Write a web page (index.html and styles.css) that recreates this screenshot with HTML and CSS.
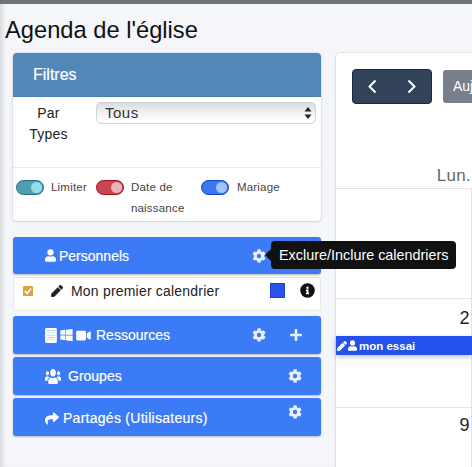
FILE: index.html
```html
<!DOCTYPE html>
<html lang="fr">
<head>
<meta charset="utf-8">
<title>Agenda de l'église</title>
<link rel="stylesheet" href="styles.css">
</head>
<body>
<svg class="defs" width="0" height="0">
  <symbol id="cog" viewBox="0 0 512 512"><path d="M487 315l-42-25a190 190 0 0 0 0-68l42-25c5-3 7-8 5-14-11-35-30-67-54-93-4-4-10-5-15-2l-42 25a187 187 0 0 0-59-34V30c0-6-4-10-9-11-36-8-73-8-107 0-5 1-9 5-9 11v49a192 192 0 0 0-59 34L96 89c-5-3-11-2-15 2-24 26-43 58-54 93-2 6 0 11 5 14l42 25a190 190 0 0 0 0 68l-42 25c-5 3-7 8-5 14 11 35 30 67 54 93 4 4 10 5 15 2l42-25a187 187 0 0 0 59 34v49c0 6 4 10 9 11 36 8 73 8 107 0 5-1 9-5 9-11v-49a192 192 0 0 0 59-34l42 25c5 3 11 2 15-2 24-26 43-58 54-93 2-6 0-11-5-14zM256 336a80 80 0 1 1 0-160 80 80 0 0 1 0 160z"/></symbol>
  <symbol id="user" viewBox="0 0 448 512"><path d="M224 256a128 128 0 1 0 0-256 128 128 0 0 0 0 256zm90 32h-17a174 174 0 0 1-146 0h-17C60 288 0 348 0 422v42c0 26 22 48 48 48h352c26 0 48-22 48-48v-42c0-74-60-134-134-134z"/></symbol>
  <symbol id="pencil" viewBox="0 0 512 512"><path d="M497 75L437 15c-20-20-52-20-72 0l-56 56 132 132 56-56c20-20 20-52 0-72zM286 94L12 368 0 488c-2 14 10 26 24 24l120-12 274-274z"/></symbol>
  <symbol id="tablet" viewBox="0 0 400 512"><path d="M352 0H48C22 0 0 22 0 48v416c0 26 22 48 48 48h304c26 0 48-22 48-48V48c0-26-22-48-48-48z"/><path class="tablet-lines" d="M50 70h300v22H50zm0 80h300v22H50zm0 80h300v22H50zm0 80h300v22H50zm0 80h300v22H50z"/></symbol>
  <symbol id="windows" viewBox="0 0 448 512"><path d="M0 93l184-25v178H0zm0 326l184 25V270H0zm204 28l244 33V270H204zm0-382v181h244V32z"/></symbol>
  <symbol id="video" viewBox="0 0 576 512"><path d="M336 64H48C22 64 0 86 0 112v288c0 26 22 48 48 48h288c26 0 48-22 48-48V112c0-26-22-48-48-48zm190 38L416 177v158l110 75c21 14 50 0 50-25V127c0-25-29-39-50-25z"/></symbol>
  <symbol id="users" viewBox="0 30 640 450" preserveAspectRatio="none"><path d="M96 224a64 64 0 1 0 0-128 64 64 0 0 0 0 128zm448 0a64 64 0 1 0 0-128 64 64 0 0 0 0 128zm32 32h-64c-18 0-34 7-45 19 40 22 69 62 75 109h66c18 0 32-14 32-32v-32c0-35-29-64-64-64zm-256 0a112 112 0 1 0 0-224 112 112 0 0 0 0 224zm77 32h-8a157 157 0 0 1-138 0h-8c-64 0-115 52-115 115v29c0 26 21 48 48 48h288c27 0 48-22 48-48v-29c0-63-51-115-115-115zm-224-13c-11-12-27-19-45-19H64c-35 0-64 29-64 64v32c0 18 14 32 32 32h66c6-47 35-87 75-109z"/></symbol>
  <symbol id="share" viewBox="0 20 512 460"><path d="M504 184L328 32c-15-13-40-3-40 18v80C128 132 0 164 0 316c0 61 39 122 83 154 13 10 32-2 27-18-45-144 21-182 178-184v88c0 21 25 31 40 18l176-152c11-10 11-28 0-38z"/></symbol>
  <symbol id="plus" viewBox="0 0 448 512"><path d="M416 208H272V64c0-18-14-32-32-32h-32c-18 0-32 14-32 32v144H32c-18 0-32 14-32 32v32c0 18 14 32 32 32h144v144c0 18 14 32 32 32h32c18 0 32-14 32-32V304h144c18 0 32-14 32-32v-32c0-18-14-32-32-32z"/></symbol>
  <symbol id="info" viewBox="0 0 512 512"><path d="M256 8a248 248 0 1 0 0 496 248 248 0 0 0 0-496zm0 110a42 42 0 1 1 0 84 42 42 0 0 1 0-84zm56 254c0 7-5 12-12 12h-88c-7 0-12-5-12-12v-24c0-7 5-12 12-12h12v-64h-12c-7 0-12-5-12-12v-24c0-7 5-12 12-12h64c7 0 12 5 12 12v100h12c7 0 12 5 12 12z"/></symbol>
  <symbol id="left" viewBox="0 0 14 20"><path d="M11 2L3 10l8 8" fill="none" stroke="currentColor" stroke-width="2.600"/></symbol>
  <symbol id="right" viewBox="0 0 14 20"><path d="M3 2l8 8-8 8" fill="none" stroke="currentColor" stroke-width="2.600"/></symbol>
</svg>

<div class="topbar"></div>
<h1 class="title">Agenda de l'église</h1>

<div class="layout">
  <aside class="sidebar">
    <section class="card filters">
      <header class="filters-head">Filtres</header>
      <div class="filters-body">
        <label class="type-label" for="types">Par Types</label>
        <div class="select-wrap">
          <select id="types" class="select"><option>Tous</option></select>
          <svg class="select-arrows" viewBox="0 0 8 12" width="8" height="12"><path d="M4 0l3.500 4.500H.5zM4 12L.5 7.500h7z"/></svg>
        </div>
      </div>
      <div class="filters-foot">
        <div class="toggle-item item-limit"><span class="toggle teal"></span><span class="toggle-text">Limiter</span></div>
        <div class="toggle-item item-birth"><span class="toggle red"></span><span class="toggle-text">Date de naissance</span></div>
        <div class="toggle-item"><span class="toggle blue"></span><span class="toggle-text">Mariage</span></div>
      </div>
    </section>

    <div class="calendars">
      <div class="panel panel-personal">
        <span class="panel-title"><svg class="ico i-user"><use href="#user"/></svg>Personnels</span>
        <svg class="ico i-cog cog-mid"><use href="#cog"/></svg>
        <div class="tooltip">Exclure/Inclure calendriers</div>
      </div>
      <div class="cal-row">
        <span class="check"><svg viewBox="0 0 10 10" width="10" height="10"><path d="M2 5l2.200 2.500L8 2.500" fill="none" stroke="#fff" stroke-width="1.500"/></svg></span>
        <svg class="ico i-pencil"><use href="#pencil"/></svg>
        <span class="cal-name">Mon premier calendrier</span>
        <span class="swatch"></span>
        <svg class="ico i-info"><use href="#info"/></svg>
      </div>
      <div class="panel panel-res">
        <span class="panel-title"><svg class="ico i-tablet"><use href="#tablet"/></svg><svg class="ico i-win"><use href="#windows"/></svg><svg class="ico i-video"><use href="#video"/></svg>Ressources</span>
        <svg class="ico i-cog cog-mid"><use href="#cog"/></svg>
        <svg class="ico i-plus"><use href="#plus"/></svg>
      </div>
      <div class="panel panel-group">
        <span class="panel-title"><svg class="ico i-users"><use href="#users"/></svg>Groupes</span>
        <svg class="ico i-cog"><use href="#cog"/></svg>
      </div>
      <div class="panel panel-share">
        <span class="panel-title"><svg class="ico i-share"><use href="#share"/></svg>Partagés (Utilisateurs)</span>
        <svg class="ico i-cog"><use href="#cog"/></svg>
      </div>
    </div>
  </aside>

  <main class="card calendar">
    <div class="toolbar">
      <div class="nav-btns">
        <svg class="chev"><use href="#left"/></svg>
        <svg class="chev"><use href="#right"/></svg>
      </div>
      <button class="today" type="button">Aujourd'hui</button>
    </div>
    <div class="day-head">Lun.</div>
    <div class="week week-1"></div>
    <div class="week week-2">
      <div class="day-num">2</div>
      <div class="event"><svg class="ico e-pencil"><use href="#pencil"/></svg><svg class="ico e-user"><use href="#user"/></svg>mon essai</div>
    </div>
    <div class="week week-3"><div class="day-num day-num-last">9</div></div>
  </main>
</div>
</body>
</html>
```
FILE: styles.css
```css
* { box-sizing: border-box; }
html, body { height: 100%; }
body {
  margin: 0;
  overflow: hidden;
  background: #f4f6f9;
  box-shadow: inset 5px 0 5px -3px rgba(0, 0, 0, .14);
  color: #1f2d3d;
  font-family: "Liberation Sans", Arial, sans-serif;
}
.defs { position: absolute; }
.topbar { height: 4px; background: #6d747c; }
.title {
  margin: 13px 0 0 5px;
  height: 36px;
  font-size: 23.700px;
  line-height: 27px;
  font-weight: 400;
  color: #111;
}
.layout { display: flex; gap: 15px; padding-left: 13px; width: 800px; align-items: flex-start; }
.sidebar { width: 308px; flex: none; }
.card { background: #fff; border-radius: 4px; box-shadow: 0 0 2px rgba(0, 0, 0, .2), 0 1px 3px rgba(0, 0, 0, .1); }
.ico { fill: currentColor; display: block; flex: none; }

.filters { height: 168px; overflow: hidden; }
.filters-head {
  height: 44px;
  padding: 13px 0 0 20px;
  background: #5288b8;
  color: #fff;
  font-size: 16px;
  line-height: 18px;
  -webkit-text-stroke: .2px #fff;
  border-bottom: 1px solid #4a7eab;
}
.filters-body { display: flex; height: 71px; border-bottom: 1px solid #e9ecef; }
.type-label {
  width: 83px;
  padding: 6px 19px 0 7px;
  text-align: center;
  font-size: 14px;
  line-height: 21px;
  letter-spacing: .2px;
  color: #222;
}
.select-wrap { position: relative; width: 220px; height: 22px; margin-top: 5px; }
.select {
  appearance: none;
  display: block;
  width: 100%;
  height: 100%;
  padding: 0 0 0 8px;
  border: 1px solid #ced4da;
  border-radius: 5px;
  background: linear-gradient(#dcdcdc, #f6f6f6 60%, #fff);
  font: 15px/20px "Liberation Sans", Arial, sans-serif;
  letter-spacing: .5px;
  color: #333;
}
.select-arrows { position: absolute; right: 4px; top: 5px; fill: #222; }

.filters-foot { display: flex; padding: 12px 0 0 3px; font-size: 11.500px; color: #444; }
.toggle-item { display: flex; align-items: flex-start; }
.item-limit { margin-right: 9px; }
.item-birth { width: 97px; margin-right: 8px; }
.toggle { position: relative; flex: none; width: 28px; height: 15px; border-radius: 8px; border: 1px solid; margin-right: 7px; }
.toggle::after { content: ""; position: absolute; right: 1px; top: 1px; width: 11px; height: 11px; border-radius: 50%; }
.teal { background: #4e9db3; border-color: #1d6f85; }
.teal::after { background: #94dfee; }
.red { background: #c9454f; border-color: #a3131f; }
.red::after { background: #eab4ba; }
.blue { background: #3a78f2; border-color: #0d47bd; margin-right: 8px; }
.blue::after { background: #a5c3fa; }
.toggle-text { line-height: 21px; margin-top: -3px; letter-spacing: .2px; }

.calendars { margin-top: 16px; display: flex; flex-direction: column; }
.panel {
  position: relative;
  display: flex;
  align-items: center;
  height: 38px;
  padding: 0 19px 0 32px;
  background: #3b7bf5;
  border-radius: 3px;
  color: #fff;
  box-shadow: 0 1px 2px rgba(0, 0, 0, .25);
  margin-bottom: 3px;
  font-size: 14px;
}
.panel-personal { height: 37px; margin-bottom: 3px; }
.panel-res { margin-top: 5px; }
.panel-title { display: flex; align-items: center; margin-right: auto; line-height: 18px; -webkit-text-stroke: .2px #fff; }
.panel-share .panel-title { padding-top: 2px; letter-spacing: .27px; }
.panel-share .i-cog { position: relative; top: -5px; }
.i-cog { width: 14px; height: 14px; color: #e8effd; }
.cog-mid { position: absolute; left: 239px; top: 12px; }
.i-plus { width: 12px; height: 14px; color: #e8effd; }
.i-user { width: 11px; height: 13px; margin-right: 3px; }
.i-tablet { width: 12px; height: 15px; margin-right: 3px; }
.tablet-lines { fill: #a8c4fa; }
.i-win { width: 13px; height: 14px; margin-right: 3px; }
.i-video { width: 15px; height: 13px; margin-right: 5px; }
.i-users { width: 16px; height: 15px; margin-right: 7px; }
.i-share { width: 14px; height: 13px; margin-right: 4px; }
.tooltip {
  position: absolute;
  left: 258px;
  top: 4px;
  z-index: 5;
  width: 185px;
  height: 28px;
  padding-left: 8px;
  background: #111;
  border-radius: 4px;
  color: #fff;
  font-size: 14.400px;
  line-height: 28px;
  white-space: nowrap;
}
.tooltip::before {
  content: "";
  position: absolute;
  left: -6px;
  top: 8px;
  border: 6px solid transparent;
  border-left: 0;
  border-right-color: #111;
}
.cal-row {
  display: flex;
  align-items: center;
  height: 34px;
  padding: 0 5px 7px 9px;
  background: #fff;
  border: 1px solid #e6e8eb;
  border-radius: 2px;
  color: #222;
  font-size: 14px;
}
.check { display: flex; align-items: center; justify-content: center; width: 10px; height: 10px; border-radius: 1px; background: #e0a33a; }
.i-pencil { width: 12px; height: 12px; margin-left: 18px; }
.cal-name { margin-left: 8px; letter-spacing: .2px; margin-right: auto; }
.swatch { width: 15px; height: 15px; background: #2a52e8; border: 1px solid #1a40e0; }
.i-info { width: 15px; height: 15px; margin-left: 15px; color: #111; }

.calendar { flex: none; width: 300px; height: 430px; position: relative; }
.toolbar { display: flex; align-items: center; gap: 11px; height: 50px; padding: 16px 0 0 16px; }
.nav-btns {
  display: flex;
  justify-content: space-between;
  align-items: center;
  width: 80px;
  height: 35px;
  padding: 0 14px;
  background: #33435a;
  border: 1px solid #1a2640;
  border-radius: 4px;
  color: #fff;
}
.chev { width: 11px; height: 15px; color: #fff; }
.today {
  flex: none;
  height: 33px;
  padding: 0 10px;
  border: 0;
  border-radius: 3px;
  background: #767f8b;
  color: #fff;
  font: 14px "Liberation Sans", Arial, sans-serif;
}
.day-head {
  width: 135px;
  height: 85px;
  padding-top: 63px;
  text-align: right;
  font-size: 17px;
  line-height: 20px;
  letter-spacing: .3px;
  color: #666;
}
.week { position: relative; width: 135.500px; border-top: 1px solid #e3e3e3; border-right: 1px solid #e3e3e3; }
.week-1 { height: 110px; }
.week-2 { height: 109px; }
.week-3 { height: 60px; }
.day-num { padding: 9px 1px 0 0; text-align: right; font-size: 18px; line-height: 20px; color: #222; }
.day-num-last { padding-top: 7px; }
.event {
  position: absolute;
  left: 0;
  top: 37px;
  display: flex;
  align-items: center;
  width: 136px;
  height: 19px;
  background: #2450ec;
  color: #fff;
  font-size: 11.500px;
  font-weight: 700;
  box-shadow: 0 2px 5px rgba(0, 0, 0, .25);
}
.e-pencil { width: 10px; height: 10px; margin: 0 1px 0 1px; }
.e-user { width: 9px; height: 11px; margin-right: 2px; }
```
